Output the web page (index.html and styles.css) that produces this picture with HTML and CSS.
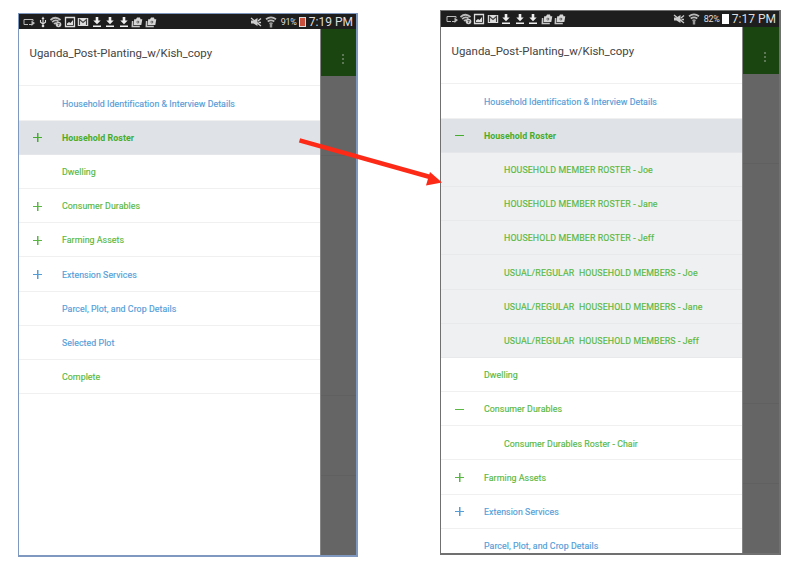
FILE: index.html
```html
<!DOCTYPE html>
<html lang="en">
<head>
<meta charset="utf-8">
<title>Survey navigation</title>
<link rel="stylesheet" href="styles.css">
</head>
<body>
<svg class="defs" aria-hidden="true">
  <symbol id="cast" viewBox="0 0 12 12"><path d="M5 8.500H1v-5h9v1.500M6 8.500h3" fill="none" stroke="#bbb"/><path d="M8.500 4.500L12 7l-3.500 3z" fill="#bbb"/></symbol>
  <symbol id="usb" viewBox="0 0 12 12"><path d="M6 2v8M3.500 4v2.200L6 8l2.500-1.800V4" fill="none" stroke="#ddd" stroke-width="1.100"/><path d="M6 .5L7.500 3h-3z" fill="#ddd"/><circle cx="6" cy="10" r="1.300" fill="#ddd"/></symbol>
  <symbol id="wifiq" viewBox="0 0 12 12"><path d="M.5 4Q5.500-.5 10.500 4M2.200 6Q5.500 3 8.500 5.500M4 8q1.500-1.500 3-.5" fill="none" stroke="#bbb" stroke-width="1.700"/><circle cx="8.500" cy="8.500" r="2.800" fill="#ccc"/><path d="M7.500 7.500h2L8.500 9v1" fill="none" stroke="#444" stroke-width=".8"/></symbol>
  <symbol id="image" viewBox="0 0 12 12"><path d="M1.500 1.500h9v9h-9z" fill="none" stroke="#ddd" stroke-width="1.300"/><path d="M3 9V7.500l2-1.500 1.500 1 2.500-3v5z" fill="#ddd"/></symbol>
  <symbol id="mail" viewBox="0 0 12 12"><path d="M.8 2h10.400v8H.8z" fill="#ddd"/><path d="M2.500 9V3.500L6 6.500l3.500-3V9" fill="none" stroke="#444" stroke-width="1.100"/></symbol>
  <symbol id="down" viewBox="0 0 12 12"><path d="M4.700 1h2.600v3.500h2.400L6 8.300 2.300 4.500h2.400zM2 9.600h8V11H2z" fill="#eee"/></symbol>
  <symbol id="bag" viewBox="0 0 12 12"><path d="M3.200 3.200H5L6 1.500h3l.5 1.700H11.300L10.300 9H2.600z" fill="#d5d5d5"/><path d="M1.600 5l-.3 5.500h7.500" fill="none" stroke="#c5c5c5" stroke-width="1.500"/><circle cx="6.900" cy="6.100" r="1.400" fill="#555"/><path d="M6.400 5.300l1.300.8-1.300.8z" fill="#ddd"/></symbol>
  <symbol id="mute" viewBox="0 0 12 12"><path d="M1 4.500h2.500L7.500 2v8L3.500 7.500H1z" fill="#ccc"/><path d="M1 2l10 8M8 5l3-2.500M8.500 6.500H11" stroke="#ccc" stroke-width="1.300"/></symbol>
  <symbol id="wifi" viewBox="0 0 12 12"><path d="M1 3.300Q6-.4 11 3.300M2.700 5.500Q6 3.200 9.300 5.500" fill="none" stroke="#bbb" stroke-width="1.700"/><path d="M4 7q2-1.300 4 0L7.200 8.500V11.500H4.800V8.500z" fill="#999"/></symbol>
</svg>
<main class="stage">
  <section class="phone phone-a">
    <header class="status">
      <div class="icons"><svg><use href="#cast"/></svg><svg><use href="#usb"/></svg><svg><use href="#wifiq"/></svg><svg><use href="#image"/></svg><svg><use href="#mail"/></svg><svg><use href="#down"/></svg><svg><use href="#down"/></svg><svg><use href="#down"/></svg><svg><use href="#bag"/></svg><svg><use href="#bag"/></svg></div>
      <div class="meta"><svg><use href="#mute"/></svg><svg><use href="#wifi"/></svg><span class="pct">91%</span><i class="battery low"></i><span class="time">7:19 PM</span></div>
    </header>
    <div class="content">
      <nav class="drawer">
        <h1>Uganda_Post-Planting_w/Kish_copy</h1>
        <ul>
          <li class="blue"><b></b><span>Household Identification &amp; Interview Details</span></li>
          <li class="selected"><b class="plus"></b><span>Household Roster</span></li>
          <li><b></b><span>Dwelling</span></li>
          <li><b class="plus"></b><span>Consumer Durables</span></li>
          <li><b class="plus"></b><span>Farming Assets</span></li>
          <li class="blue"><b class="plus"></b><span>Extension Services</span></li>
          <li class="blue"><b></b><span>Parcel, Plot, and Crop Details</span></li>
          <li class="blue"><b></b><span>Selected Plot</span></li>
          <li><b></b><span>Complete</span></li>
        </ul>
      </nav>
      <aside class="behind"><div class="bar"><i class="dots"></i></div><div class="block first"></div><div class="block second"></div><div class="block third"></div></aside>
    </div>
  </section>
  <section class="phone phone-b">
    <header class="status">
      <div class="icons"><svg><use href="#cast"/></svg><svg><use href="#wifiq"/></svg><svg><use href="#image"/></svg><svg><use href="#mail"/></svg><svg><use href="#down"/></svg><svg><use href="#down"/></svg><svg><use href="#down"/></svg><svg><use href="#bag"/></svg><svg><use href="#bag"/></svg></div>
      <div class="meta"><svg><use href="#mute"/></svg><svg><use href="#wifi"/></svg><span class="pct">82%</span><i class="battery"></i><span class="time">7:17 PM</span></div>
    </header>
    <div class="content">
      <nav class="drawer">
        <h1>Uganda_Post-Planting_w/Kish_copy</h1>
        <ul>
          <li class="blue"><b></b><span>Household Identification &amp; Interview Details</span></li>
          <li class="selected"><b class="minus"></b><span>Household Roster</span></li>
          <li class="sub shaded"><span>HOUSEHOLD MEMBER ROSTER - Joe</span></li>
          <li class="sub shaded"><span>HOUSEHOLD MEMBER ROSTER - Jane</span></li>
          <li class="sub shaded"><span>HOUSEHOLD MEMBER ROSTER - Jeff</span></li>
          <li class="sub shaded"><span>USUAL/REGULAR&nbsp; HOUSEHOLD MEMBERS - Joe</span></li>
          <li class="sub shaded"><span>USUAL/REGULAR&nbsp; HOUSEHOLD MEMBERS - Jane</span></li>
          <li class="sub shaded"><span>USUAL/REGULAR&nbsp; HOUSEHOLD MEMBERS - Jeff</span></li>
          <li><b></b><span>Dwelling</span></li>
          <li><b class="minus"></b><span>Consumer Durables</span></li>
          <li class="sub"><span>Consumer Durables Roster - Chair</span></li>
          <li><b class="plus"></b><span>Farming Assets</span></li>
          <li class="blue"><b class="plus"></b><span>Extension Services</span></li>
          <li class="blue"><b></b><span>Parcel, Plot, and Crop Details</span></li>
        </ul>
      </nav>
      <aside class="behind"><div class="bar"><i class="dots"></i></div><div class="block first"></div><div class="block second"></div><div class="block third"></div></aside>
    </div>
  </section>
  <svg class="arrow" viewBox="0 0 150 60"><path d="M3.500 9.300L134 46" stroke="#fd2a18" stroke-width="4.500"/><path d="M146 51.500L130 54.500l4-13.500z" fill="#fd2a18"/></svg>
</main>
</body>
</html>
```
FILE: styles.css
```css
* { box-sizing: border-box; }
body { margin: 0; background: #fff; font-family: Roboto, sans-serif; }
.defs { display: none; }
.stage { position: relative; width: 800px; height: 578px; padding: 10px 0 0 18px; display: flex; align-items: flex-start; gap: 82px; overflow: hidden; }
.phone { width: 340px; height: 544px; display: flex; flex-direction: column; overflow: hidden; border: 1px solid #7f98bf; border-right-width: 2px; border-bottom-width: 2px; background: #fff; }
.phone-a { margin-top: 3px; }
.phone-b { width: 341px; height: 545px; border-color: #707070; }
.status { flex: none; height: 15px; background: #1e1e1e; color: #ddd; display: flex; justify-content: space-between; align-items: center; padding: 0 3px 0 4px; }
.phone-b .status { height: 16px; padding-left: 5px; }
.icons { display: flex; gap: 1.5px; }
.icons svg, .meta svg { width: 12px; height: 12px; }
.meta { display: flex; align-items: center; }
.meta svg + svg { margin-left: 3px; }
.pct { font-size: 9px; margin-left: 4px; width: 18px; letter-spacing: -.3px; }
.time { font-size: 12px; margin-left: 3px; white-space: nowrap; }
.battery { width: 7px; height: 10px; background: #fff; }
.low { background: #c9503c; border: 1px solid #ddd; }
.content { flex: 1; min-height: 0; display: flex; }
.drawer { width: 301px; flex: none; overflow: hidden; }
h1 { margin: 0; height: 57.400px; padding: 16px 0 0 10.500px; border-bottom: 1px solid #f0f0f0; font-size: 11.450px; line-height: 16px; font-weight: 400; color: #444; white-space: nowrap; }
ul { list-style: none; margin: 0; padding: 0; }
li { height: 34.200px; padding-top: 1.500px; display: flex; align-items: center; border-bottom: 1px solid #f0f0f0; color: #59b842; font-size: 8.800px; letter-spacing: .06px; font-weight: 400; -webkit-text-stroke: .15px currentColor; white-space: nowrap; }
li b { width: 43px; flex: none; height: 11px; }
.minus { background: linear-gradient(currentColor, currentColor) 14px 5px / 9px 1px no-repeat; }
.plus { background: linear-gradient(currentColor, currentColor) 14px 5px / 9px 1px no-repeat, linear-gradient(currentColor, currentColor) 17.500px 1px / 1.500px 9px no-repeat; }
.blue { color: #539dd8; }
.selected { background: #dfe2e7; border-color: #e4e6ea; color: #45ad2c; font-weight: 700; letter-spacing: .08px; -webkit-text-stroke: 0; }
.sub { padding-left: 63px; }
.shaded { background: #eff0f2; border-color: #e8e9eb; }
.shaded span { letter-spacing: .12px; }
.behind { flex: 1; background: #656565; border-left: 1px solid #858585; }
.bar { height: 47px; background: #1a4510; display: flex; align-items: center; justify-content: center; padding: 12px 0 0 8px; }
.dots { width: 2px; height: 10px; background: repeating-linear-gradient(#5d7857 0 2px, transparent 2px 4px); }
.block { border-bottom: 1px solid #606060; }
.first { height: 80px; }
.phone-b .first { height: 90px; }
.second { height: 240px; }
.third { height: 80px; }
.arrow { position: absolute; left: 296px; top: 131px; width: 150px; height: 60px; }
```
